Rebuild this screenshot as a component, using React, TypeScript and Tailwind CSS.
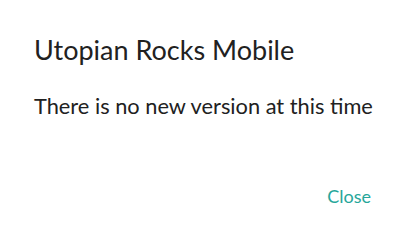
export default function App() {
  return (
    <div
      className="w-[404px] h-[242px] bg-white flex flex-col text-[#212121]"
      style={{ fontFamily: "Lato, sans-serif" }}
    >
      <div className="pl-[34px] pr-4 pt-[34px]">
        <h4 className="text-[27px] leading-[32px]">Utopian Rocks Mobile</h4>
        <p className="mt-[26px] text-[21.8px] leading-[28px]">
          There is no new version at this time
        </p>
      </div>
      <div className="flex justify-end pr-[25px] mt-auto mb-[32px]">
        <button className="text-[18px] leading-[28px] px-2 text-[#26a69a]">
          Close
        </button>
      </div>
    </div>
  );
}
